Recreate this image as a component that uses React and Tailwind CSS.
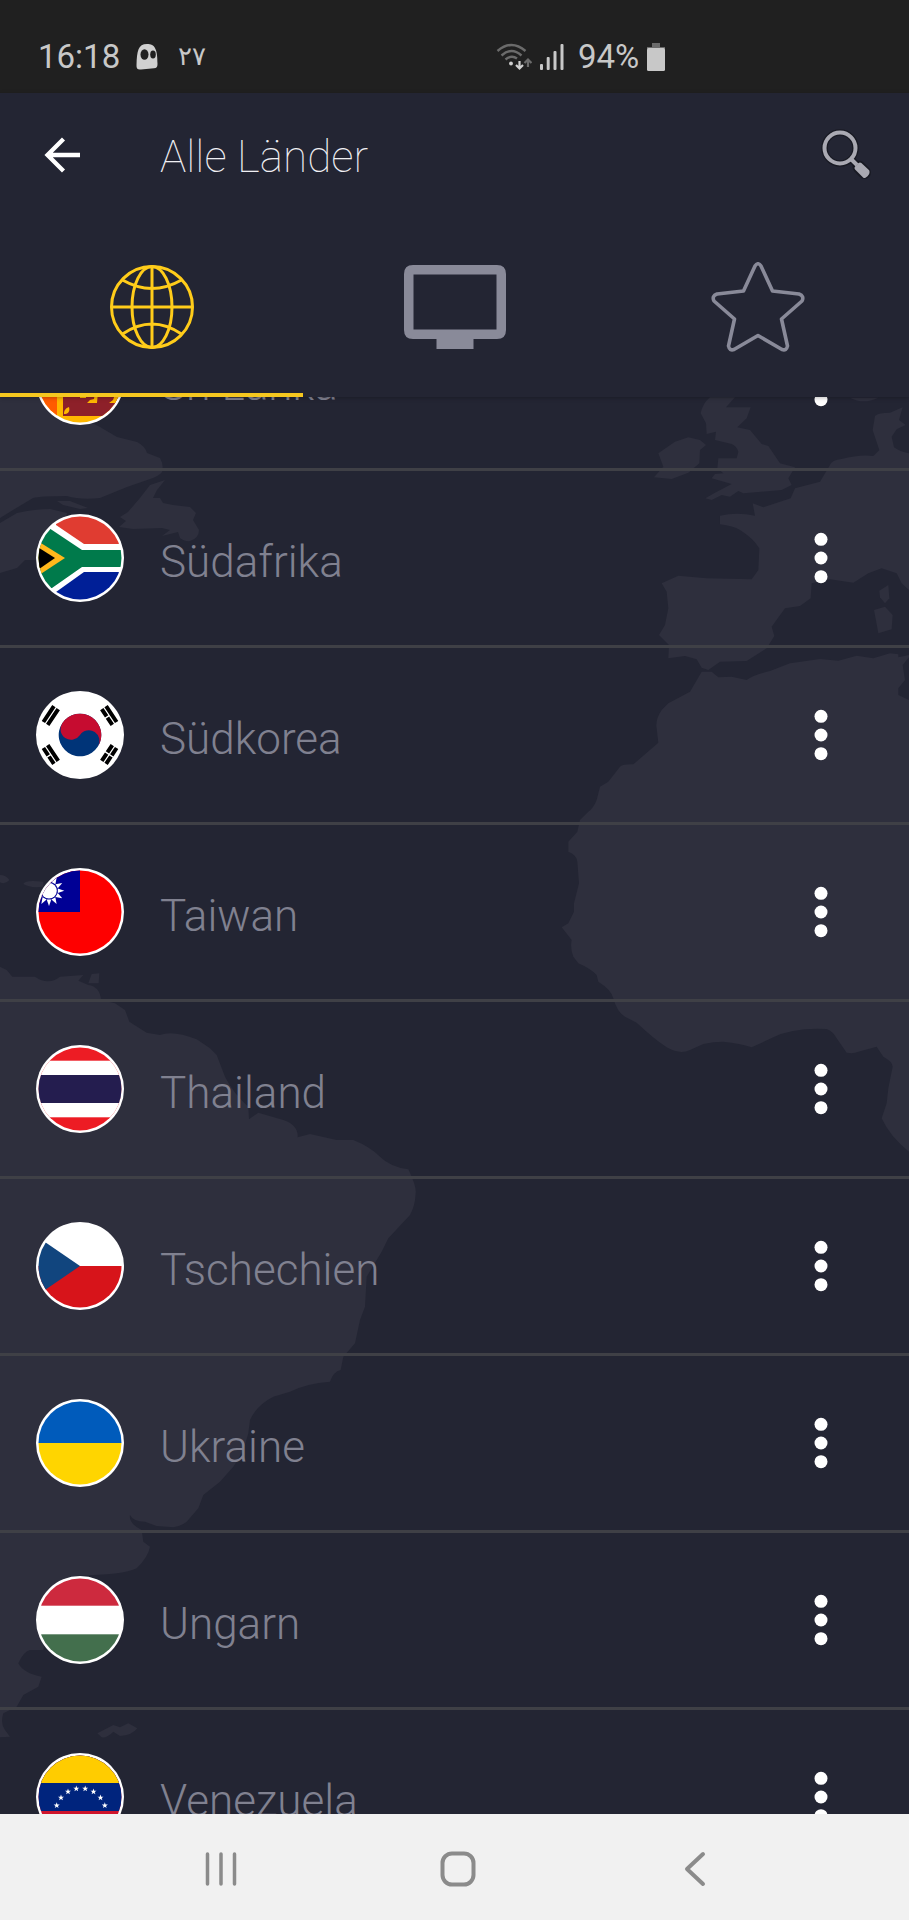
import { useId, useLayoutEffect, useRef } from "react";

const star = (cx, cy, r) =>
  Array.from({ length: 10 }, (_, i) => {
    const a = (Math.PI / 5) * i - Math.PI / 2;
    const d = i % 2 ? r * 0.4 : r;
    return `${cx + d * Math.cos(a)},${cy + d * Math.sin(a)}`;
  }).join(" ");

const flags = {
  lk: (
    <>
      <rect width="88" height="88" fill="#ffb700" />
      <rect x="0" y="9" width="21" height="79" fill="#ff5b00" />
      <rect x="27" y="9" width="61" height="70" fill="#8d2029" />
      <path d="M28 77c0-4 2-6 5-7 1 4 0 7-5 7zM51 66l3-3 4-1 1-7h3l-1 11zM73 66l4-3 3-8h4l-2 11zM44 59h6v2h-6z" fill="#ffb700" />
    </>
  ),
  za: (
    <>
      <rect width="88" height="88" fill="#fff" />
      <path d="M20 11L48 30H88V0H20z" fill="#e03c31" />
      <path d="M20 78L48 58H88V88H20z" fill="#001f97" />
      <path d="M0 5L16 16L46 36H88V53H46L16 74L0 85z" fill="#007a4b" />
      <path d="M0 26L29 44L0 63z" fill="#ffb81c" />
      <path d="M0 32L19 44L0 57z" fill="#000" />
    </>
  ),
  kr: (
    <>
      <rect width="88" height="88" fill="#fff" />
      <g transform="translate(44 44) rotate(33.7)">
        <circle r="21.3" fill="#003478" />
        <path d="M-21.3 0A21.3 21.3 0 0 1 21.3 0A10.65 10.65 0 0 0 0 0A10.65 10.65 0 0 1-21.3 0z" fill="#c60c30" />
        <path d="M-32.5-9.500V9.500M-37.700-9.500V9.500M32.500-9.500V-.7M32.500.7V9.500M37.700-9.500V-.7M37.700.7V9.500" stroke="#000" strokeWidth="4" />
      </g>
      <g transform="translate(44 44) rotate(-33.7)">
        <path d="M-32.5-9.500V9.500M-37.700-9.500V-.7M-37.700.7V9.500M32.500-9.500V-.7M32.500.7V9.500M37.700-9.500V9.500" stroke="#000" strokeWidth="4" />
      </g>
    </>
  ),
  tw: (
    <>
      <rect width="88" height="88" fill="#fe0000" />
      <rect width="44" height="44" fill="#000095" />
      <g transform="translate(13 22.700)" fill="#fff">
        {Array.from({ length: 12 }, (_, i) => (
          <path key={i} d="M-2.300-8.800L0-15.300L2.300-8.800z" transform={`rotate(${i * 30})`} />
        ))}
        <circle r="7.800" />
      </g>
    </>
  ),
  th: (
    <>
      <rect width="88" height="88" fill="#ed1c24" />
      <rect y="15.700" width="88" height="56.600" fill="#fff" />
      <rect y="30" width="88" height="28" fill="#241d4f" />
    </>
  ),
  cz: (
    <>
      <rect width="88" height="44" fill="#fff" />
      <rect y="44" width="88" height="44" fill="#d7141a" />
      <path d="M0 14L44 44L0 74z" fill="#11457e" />
    </>
  ),
  ua: (
    <>
      <rect width="88" height="44" fill="#005bbb" />
      <rect y="44" width="88" height="44" fill="#ffd500" />
    </>
  ),
  hu: (
    <>
      <rect width="88" height="88" fill="#fff" />
      <rect width="88" height="29.700" fill="#cd2a3e" />
      <rect y="58.300" width="88" height="30" fill="#436f4d" />
    </>
  ),
  ve: (
    <>
      <rect width="88" height="88" fill="#cf142b" />
      <rect width="88" height="58" fill="#00247d" />
      <rect width="88" height="30" fill="#fc0" />
      {[[20.7, 52.5], [25, 44.7], [32, 38.7], [40.3, 35.7]].map(([x, y]) => (
        <g key={x} fill="#fff">
          <polygon points={star(x, y, 3.2)} />
          <polygon points={star(89.5 - x, y, 3.2)} />
        </g>
      ))}
    </>
  ),
};

const countries = [
  { code: "lk", name: "Sri Lanka" },
  { code: "za", name: "Südafrika" },
  { code: "kr", name: "Südkorea" },
  { code: "tw", name: "Taiwan" },
  { code: "th", name: "Thailand" },
  { code: "cz", name: "Tschechien" },
  { code: "ua", name: "Ukraine" },
  { code: "hu", name: "Ungarn" },
  { code: "ve", name: "Venezuela" },
];

function Flag({ code }) {
  const id = useId();
  return (
    <svg viewBox="0 0 88 88" className="size-[88px] shrink-0" aria-hidden="true">
      <clipPath id={id}>
        <circle cx="44" cy="44" r="41.500" />
      </clipPath>
      <circle cx="44" cy="44" r="44" fill="#fff" />
      <g clipPath={`url(#${id})`}>{flags[code]}</g>
    </svg>
  );
}

function WorldMap() {
  return (
    <svg
      viewBox="0 397 909 1417"
      preserveAspectRatio="xMidYMid slice"
      className="absolute inset-0 size-full"
      fill="#2e2f3d"
      aria-hidden="true"
    >
      <path d="M0 397H45Q70 412 100 427L117 437L137 442Q145 446 147 453L160 458Q164 465 162 472Q160 475 153 478L127 487L100 498Q80 500 67 496Q40 496 33 498L13 510L0 518z" />
      <path d="M0 523L17 513Q35 509 50 509L67 513L60 545L38 560L25 560L17 568L0 573z" />
      <path d="M57 501L70 501L88 508L80 509L63 505z" />
      <path d="M165 480L150 485L140 498L128 512L120 517L126 521L119 527L133 529L162 528L170 530L162 536L178 532L180 538Q186 542 190 541Q199 538 199 530L193 520L196 513L190 507L173 505L163 503L160 498L153 498L157 490z" />
      <g transform="translate(0 370) translate(600 0) scale(.33333)">
        <path d="M330 82H405L378 112H452L440 145L412 172L450 180L485 222L505 228L540 280L585 292L565 325L575 345L545 360L430 370L415 363L390 380L365 375L335 390L316 385L345 368L395 342L335 325L345 312L370 310L352 295L355 265H410L415 245Q410 228 395 222L345 210L348 185L320 192L318 160L302 130Q308 100 330 82z" />
        <path d="M265 202L300 210L318 225L300 240L298 280L265 308L215 327L162 322L190 290L175 250L225 215z" />
        <path d="M750 83H835Q790 105 750 83z" />
        <path d="M927 250Q900 245 882 232L875 200L890 178L917 165L897 150L908 112L870 128Q835 128 825 138L818 180L838 240L820 258Q780 252 725 267Q695 270 690 285L660 335L585 355L572 385L490 412L458 400L465 437Q410 425 360 437V463Q400 468 420 480Q460 505 478 535L475 600L455 628L320 625L235 617L185 640L200 665L205 715L195 765L177 795L207 825L205 865L255 858L290 868L305 893L325 900L360 875L440 873L500 835L523 798L515 770L555 715L600 708L632 685L635 640L690 628L760 638L805 610L845 595L890 610L905 640L927 660z" />
        <path d="M865 645L838 662L840 682L855 700L868 685z" />
        <path d="M855 710L822 720L835 790L875 778L878 735z" />
        <path d="M908 885L927 862V855L895 862V853L870 850L820 865L770 857L715 872L660 867L570 880L510 903Q460 915 440 930L395 920L355 922L335 905H305L270 965L205 1000L185 1020Q165 1050 170 1075L175 1118L100 1183Q70 1182 60 1190L25 1235L0 1250L-10 1290Q-20 1315 -35 1325L-60 1350L-68 1385L-95 1415V1445Q-70 1455 -68 1475L-63 1540L-78 1600V1625L-95 1660L-115 1672L-85 1710Q-90 1735 -80 1760L-65 1780Q-30 1795 -10 1815L-5 1835Q35 1860 40 1885Q50 1925 75 1940L110 1958Q160 2005 200 2032Q240 2055 270 2040L310 2022Q340 2015 370 2015Q420 2020 455 2032L520 2002Q580 1972 680 1977Q700 1985 710 2005L740 2048Q760 2052 775 2045L830 2030L850 2060Q878 2075 878 2090L865 2155L860 2200L845 2245Q870 2300 927 2345V990L895 975V955L915 930z" />
      </g>
      <g transform="translate(0 810) scale(.33333)">
        <path d="M0 470L20 480L37 500H105Q145 528 180 500L250 495L235 512L265 525Q300 530 303 570L345 580L375 600L388 635L440 668L480 675Q520 660 590 688L630 715L650 735L675 800Q700 850 745 890L747 928L775 908L850 930Q895 945 893 982L930 972L1010 990H1060Q1110 1010 1140 1040Q1170 1070 1225 1078Q1250 1130 1247 1150Q1245 1190 1230 1215L1165 1285L1145 1325L1100 1400L1095 1490L1080 1530L1065 1600L1030 1640L1022 1680Q1000 1685 990 1715Q920 1720 870 1745L820 1760Q770 1785 750 1830L745 1870Q730 1930 700 1970L660 2015L610 2055L595 2095L560 2135Q540 2150 520 2152L470 2148L435 2135Q400 2135 390 2115Q385 2140 425 2160L430 2195L450 2210Q445 2240 410 2275Q370 2295 230 2297L150 2400L130 2520H90Q70 2525 55 2560Q70 2590 125 2600L115 2630L70 2655L50 2690L10 2710Q0 2740 15 2760L30 2780L0 2782z" />
        <path d="M275 492L298 490L296 520L265 520zM0 195Q18 195 28 210Q15 225 0 217zM70 222Q75 208 130 215V230Q90 235 70 222z" />
        <path d="M292 2770L340 2745L360 2752L385 2740L412 2755Q395 2777 360 2778L340 2765Q320 2785 305 2782z" />
      </g>
    </svg>
  );
}

function StatusBar() {
  return (
    <div className="flex h-[93px] shrink-0 items-center bg-[#202020] pt-5 pl-[38px] text-[33px] text-[#c8c8c8]">
      <span>16:18</span>
      <svg viewBox="0 0 22 26" className="ml-4 h-[26px] w-[22px]" aria-hidden="true">
        <path d="M.5 21C1 7 2 0 11 0c8 0 10.500 5 10.500 20 0 3-1 4-3.500 4.200L5 25.500C1.500 26 .3 24.500.5 21z" fill="#d0d0d0" />
        <ellipse cx="8.500" cy="10.500" rx="4" ry="5.300" fill="#202020" />
        <ellipse cx="17" cy="10.500" rx="2.800" ry="4" fill="#202020" />
      </svg>
      <span className="ml-5 font-['DejaVu_Sans',sans-serif] text-[26px] font-extralight">٢٧</span>
      <div className="ml-auto flex w-[413px] items-center">
        <svg viewBox="0 0 36 28" className="h-7 w-9" fill="none" aria-hidden="true">
          <path d="M1.500 8Q15.500-4 29.500 8M5.500 12.500Q15.500 3.500 25.500 12.500M9.500 16.500Q15.500 11.500 21 15.500" stroke="#6b6b6b" strokeWidth="2.400" />
          <circle cx="15" cy="20.500" r="1.900" fill="#d0d0d0" />
          <path d="M23.500 18v7M20 22l3.500 3.500L27 22" stroke="#d0d0d0" strokeWidth="2.200" />
          <path d="M32 24v-7M28.500 20l3.500-3.500L35.500 20" stroke="#6b6b6b" strokeWidth="2.200" />
        </svg>
        <svg viewBox="0 0 24 26" className="ml-2 h-[26px] w-6" fill="#c8c8c8" aria-hidden="true">
          <rect y="20" width="3" height="6" rx="1" />
          <rect x="6.700" y="13" width="3" height="13" rx="1" />
          <rect x="13.500" y="7" width="3" height="19" rx="1" />
          <rect x="20.500" width="3" height="26" rx="1" />
        </svg>
        <span className="ml-[14px]">94%</span>
        <svg viewBox="0 0 18 28" className="ml-2 h-7 w-[18px]" aria-hidden="true">
          <path d="M0 6V4h5V0h8v4h5v2z" fill="#6b6b6b" />
          <rect y="5" width="18" height="23" rx="1.500" fill="#c8c8c8" />
        </svg>
      </div>
    </div>
  );
}

function Header() {
  return (
    <header className="relative z-10 shrink-0 bg-[#232533] shadow-[0_1px_4px_rgba(0,0,0,0.25)]">
      <div className="flex h-[123px] items-center pr-9 pl-11">
        <button type="button" aria-label="Zurück" className="shrink-0">
          <svg viewBox="0 0 36 36" className="size-9" fill="none" stroke="#fff" strokeWidth="4.300" aria-hidden="true">
            <path d="M36 18H3.500M19.500 2L3.500 18L19.500 34" />
          </svg>
        </button>
        <h1 className="ml-20 pt-1 text-[44px] leading-[54px] font-thin text-[#f0f0f4]">Alle Länder</h1>
        <button type="button" aria-label="Suchen" className="ml-auto">
          <svg viewBox="0 0 52 52" className="size-[52px]" fill="none" aria-hidden="true">
            <g stroke="#14151d" strokeOpacity=".7">
              <circle cx="19" cy="19" r="15.500" strokeWidth="6.500" />
              <path d="M30 30L36 36" strokeWidth="7" />
              <path d="M38 38L43.500 43.500" strokeWidth="13" strokeLinecap="round" />
            </g>
            <g stroke="#a9a9b2">
              <circle cx="19" cy="19" r="15.500" strokeWidth="4" />
              <path d="M29.500 29.500L36 36" strokeWidth="4" />
              <path d="M35.500 39L39 35.500L46.500 42.500Q47 45 43.500 47z" fill="#a9a9b2" strokeWidth="4" strokeLinejoin="round" />
            </g>
          </svg>
        </button>
      </div>
      <nav className="grid h-[181px] grid-cols-3">
        <button type="button" aria-label="Länder" className="flex items-center justify-center border-b-4 border-[#f5c71f] pt-1">
          <svg viewBox="0 0 84 84" className="size-[84px]" fill="none" stroke="#ffcc1a" strokeWidth="3" aria-hidden="true">
            <circle cx="42" cy="42" r="40.500" />
            <ellipse cx="42" cy="42" rx="20" ry="40.500" />
            <path d="M42 1.500V82.500M1.500 42H82.500M12.500 15Q42 32 71.500 15M12.500 69Q42 49 71.500 69" />
          </svg>
        </button>
        <button type="button" aria-label="Fernseher" className="flex items-center justify-center border-b-4 border-transparent pt-1">
          <svg viewBox="0 0 102 84" className="h-[84px] w-[102px]" aria-hidden="true">
            <path fillRule="evenodd" d="M9 0H93Q102 0 102 9V65Q102 74 93 74H69.500V84H32.500V74H9Q0 74 0 65V9Q0 0 9 0zM9.500 9.500V64.500H92.500V9.500z" fill="#898a99" />
          </svg>
        </button>
        <button type="button" aria-label="Favoriten" className="flex items-center justify-center border-b-4 border-transparent pt-1">
          <svg viewBox="0 0 94 90" className="h-[90px] w-[94px]" fill="none" stroke="#898a99" strokeWidth="3.600" strokeLinejoin="round" aria-hidden="true">
            <path d="M44 4Q47-0.500 50 4L61.500 29L88 32Q93.500 34 91 39L70.500 57L76.500 84Q75.500 89 71 87.500L47 73.500L23 87.500Q18.500 89 17.500 84L23.500 57L3 39Q.5 34 6 32L32.500 29z" />
          </svg>
        </button>
      </nav>
    </header>
  );
}

function CountryRow({ code, name }) {
  return (
    <li className="flex h-[177px] items-center border-b-[3px] border-[#3f4046] pr-[76px] pl-9">
      <Flag code={code} />
      <span className="ml-9 pt-2 text-[44px] leading-[54px] font-light text-[#808190]">{name}</span>
      <button type="button" aria-label={`Optionen für ${name}`} className="ml-auto">
        <svg viewBox="0 0 24 52" className="h-[52px] w-6" fill="#fff" aria-hidden="true">
          <circle cx="12" cy="7.300" r="6.500" />
          <circle cx="12" cy="26" r="6.500" />
          <circle cx="12" cy="44.700" r="6.500" />
        </svg>
      </button>
    </li>
  );
}

function SystemNav() {
  return (
    <nav className="flex h-[106px] shrink-0 items-center justify-center bg-[#f1f1f1] pt-1 pl-[6px]">
      <button type="button" aria-label="Letzte Apps" className="flex w-[237px] justify-center">
        <svg viewBox="0 0 36 36" className="size-9" fill="none" stroke="#8b8b8b" strokeWidth="3.500" strokeLinecap="round" aria-hidden="true">
          <path d="M4.500 3V33M18 3V33M31.500 3V33" />
        </svg>
      </button>
      <button type="button" aria-label="Startseite" className="flex w-[237px] justify-center">
        <svg viewBox="0 0 36 36" className="size-9" fill="none" stroke="#8b8b8b" strokeWidth="4" aria-hidden="true">
          <rect x="2.500" y="2.500" width="31" height="31" rx="9.500" />
        </svg>
      </button>
      <button type="button" aria-label="Zurück" className="flex w-[237px] justify-center">
        <svg viewBox="0 0 36 36" className="size-9" fill="none" stroke="#8b8b8b" strokeWidth="4" strokeLinecap="round" strokeLinejoin="round" aria-hidden="true">
          <path d="M26 3L10 18L26 33" />
        </svg>
      </button>
    </nav>
  );
}

export default function App() {
  const list = useRef(null);
  useLayoutEffect(() => {
    list.current.scrollTop = 103;
  }, []);

  return (
    <div className="flex h-screen flex-col overflow-hidden bg-[#232533] font-[Roboto,sans-serif]">
      <StatusBar />
      <Header />
      <main className="relative min-h-0 flex-1">
        <WorldMap />
        <ul ref={list} className="relative h-full overflow-y-auto [scrollbar-width:none]">
          {countries.map((c) => (
            <CountryRow key={c.code} {...c} />
          ))}
        </ul>
      </main>
      <SystemNav />
    </div>
  );
}
